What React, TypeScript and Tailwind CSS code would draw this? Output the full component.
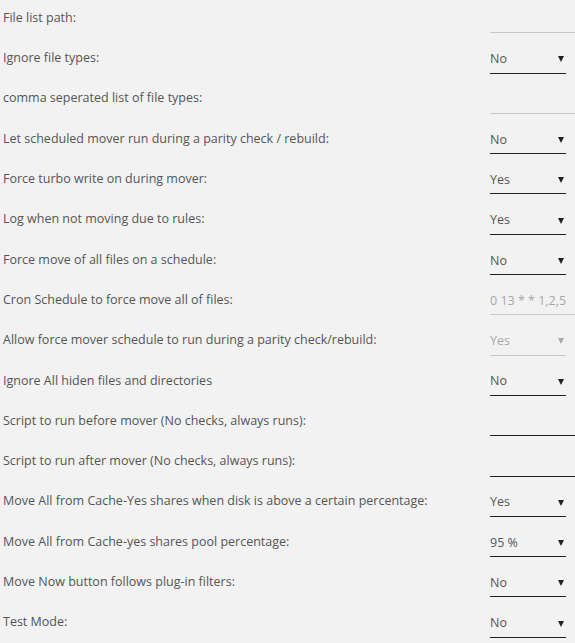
const rows: { label: string; kind: "input" | "select"; value?: string; muted?: boolean }[] = [
  { label: "File list path:", kind: "input", muted: true },
  { label: "Ignore file types:", kind: "select", value: "No" },
  { label: "comma seperated list of file types:", kind: "input", muted: true },
  { label: "Let scheduled mover run during a parity check / rebuild:", kind: "select", value: "No" },
  { label: "Force turbo write on during mover:", kind: "select", value: "Yes" },
  { label: "Log when not moving due to rules:", kind: "select", value: "Yes" },
  { label: "Force move of all files on a schedule:", kind: "select", value: "No" },
  { label: "Cron Schedule to force move all of files:", kind: "input", value: "0 13 * * 1,2,5", muted: true },
  { label: "Allow force mover schedule to run during a parity check/rebuild:", kind: "select", value: "Yes", muted: true },
  { label: "Ignore All hiden files and directories", kind: "select", value: "No" },
  { label: "Script to run before mover (No checks, always runs):", kind: "input" },
  { label: "Script to run after mover (No checks, always runs):", kind: "input" },
  { label: "Move All from Cache-Yes shares when disk is above a certain percentage:", kind: "select", value: "Yes" },
  { label: "Move All from Cache-yes shares pool percentage:", kind: "select", value: "95 %" },
  { label: "Move Now button follows plug-in filters:", kind: "select", value: "No" },
  { label: "Test Mode:", kind: "select", value: "No" },
];

function Arrow({ muted }: { muted?: boolean }) {
  return (
    <svg width="6" height="6" viewBox="0 0 6 6" className={muted ? "fill-[#aaaaaa]" : "fill-[#222222]"}>
      <polygon points="0,0 6,0 3,6" />
    </svg>
  );
}

export default function App() {
  return (
    <div
      className="w-[575px] h-[643px] overflow-hidden bg-[#f2f2f2] text-[12.5px] text-[#555555]"
      style={{ fontFamily: '"Open Sans", sans-serif' }}
    >
      {rows.map((row) => (
        <div key={row.label} className="flex h-[40.3px] items-center">
          <div className="flex-1 pl-[3px] pb-[4px] leading-none">{row.label}</div>
          <div className="w-[85px] shrink-0 self-stretch flex flex-col justify-end pb-[7px]">
            {row.kind === "select" ? (
              <div
                className={`w-[76px] flex items-center justify-between pr-[2px] pb-[7px] border-b ${
                  row.muted ? "border-[#c8c8c8] text-[#a8a8a8]" : "border-[#222222] text-[#555555]"
                }`}
              >
                <span className="leading-none">{row.value}</span>
                <Arrow muted={row.muted} />
              </div>
            ) : (
              <div
                className={`w-[100px] h-[22px] flex items-end pb-[7px] border-b ${
                  row.muted ? "border-[#c8c8c8] text-[#a8a8a8]" : "border-[#222222]"
                }`}
              >
                <span className="leading-none">{row.value}</span>
              </div>
            )}
          </div>
        </div>
      ))}
    </div>
  );
}
